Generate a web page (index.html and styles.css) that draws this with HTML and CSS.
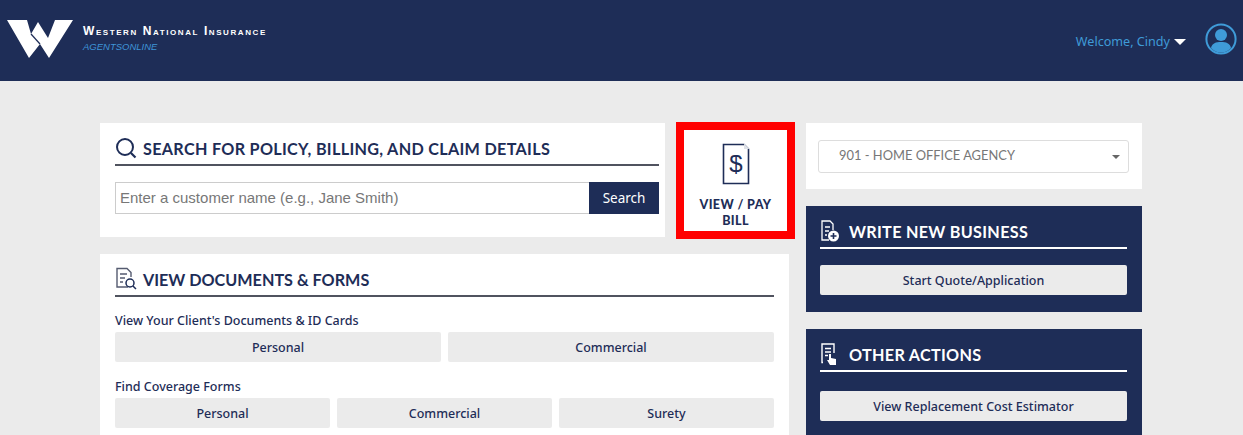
FILE: index.html
```html
<!DOCTYPE html>
<html lang="en">
<head>
    <meta charset="UTF-8">
    <title>AgentsOnline</title>
    <link rel="stylesheet" href="styles.css">
</head>
<body>
<header class="top-bar">
    <div class="brand">
        <svg class="brand-logo" viewBox="0 0 67 40" width="67" height="40">
            <path fill="#fff" d="M0 1H20L24 15L31 3L41 19L48 1H66L42 39L33 25L22 39Z"/>
            <path d="M24 15L33 25" stroke="#1e2d57" stroke-width="1.200"/>
        </svg>
        <div class="brand-text">
            <div class="brand-name">Western National Insurance</div>
            <div class="brand-sub">AGENTSONLINE</div>
        </div>
    </div>
    <div class="user-menu">
        <span class="welcome">Welcome, Cindy</span>
        <span class="caret"></span>
        <svg class="avatar" viewBox="0 0 32 32" width="32" height="32">
            <circle cx="16" cy="16" r="14.600" fill="none" stroke="#3f9bd8" stroke-width="2"/>
            <circle cx="16" cy="12" r="6" fill="#3f9bd8"/>
            <path fill="#3f9bd8" d="M6 25C7 20 11 19 16 19S25 20 26 25C23 28 20 29.500 16 29.500S9 28 6 25Z"/>
        </svg>
    </div>
</header>

<main class="page">
    <div class="col-left">
        <div class="top-row">
            <section class="card search-card">
                <h2 class="card-title">
                    <svg class="title-icon" viewBox="0 0 22 22" width="22" height="22">
                        <circle cx="10" cy="10" r="8" fill="none" stroke="#1e2d57" stroke-width="2"/>
                        <path d="M16 16L20.500 20.500" stroke="#1e2d57" stroke-width="2.200"/>
                    </svg>
                    SEARCH FOR POLICY, BILLING, AND CLAIM DETAILS
                </h2>
                <div class="search-form">
                    <input class="search-input" type="text" placeholder="Enter a customer name (e.g., Jane Smith)">
                    <button class="search-btn">Search</button>
                </div>
            </section>
            <a class="pay-box">
                <svg viewBox="0 0 28 42" width="28" height="42">
                    <path d="M1.500 1.500H22L26.500 6V40.500H1.500Z" fill="#fff" stroke="#1e2d57" stroke-width="1.600"/>
                    <path d="M22 0.500V6H27.500Z" fill="#dfe2e8"/>
                    <text x="14" y="29" text-anchor="middle" class="dollar">$</text>
                </svg>
                <span>VIEW / PAY<br>BILL</span>
            </a>
        </div>

        <section class="card docs-card">
            <h2 class="card-title">
                <svg class="title-icon" viewBox="0 0 22 24" width="22" height="24">
                    <path d="M13 20H2V1.500H12L16 5.500V10" fill="none" stroke="#555b70" stroke-width="1.400"/>
                    <path d="M5 7H12M5 11H10M5 15H8" stroke="#555b70" stroke-width="1.400"/>
                    <circle cx="15" cy="16" r="4" fill="none" stroke="#1e2d57" stroke-width="1.500"/>
                    <path d="M18 19L21 22" stroke="#1e2d57" stroke-width="1.500"/>
                </svg>
                VIEW DOCUMENTS &amp; FORMS
            </h2>
            <div class="group-label">View Your Client's Documents &amp; ID Cards</div>
            <div class="btn-row">
                <button class="grey-btn">Personal</button>
                <button class="grey-btn">Commercial</button>
            </div>
            <div class="group-label group-label-second">Find Coverage Forms</div>
            <div class="btn-row">
                <button class="grey-btn">Personal</button>
                <button class="grey-btn">Commercial</button>
                <button class="grey-btn">Surety</button>
            </div>
        </section>
    </div>

    <div class="col-right">
        <section class="card agency-card">
            <div class="agency-select">
                <span class="agency-name">901 - HOME OFFICE AGENCY</span>
                <span class="select-caret"></span>
            </div>
        </section>
        <section class="dark-card write-card">
            <h2 class="card-title">
                <svg class="title-icon" viewBox="0 0 20 24" width="20" height="24">
                    <path d="M9 21H2V2H10L13 5V11" fill="none" stroke="#fff" stroke-width="1.300"/>
                    <path d="M5 8H10M5 12H9M5 16H7" stroke="#fff" stroke-width="1.300"/>
                    <circle cx="13.500" cy="17" r="5.500" fill="#fff"/>
                    <path d="M13.500 14V20M10.500 17H16.500" stroke="#1e2d57" stroke-width="1.600"/>
                </svg>
                WRITE NEW BUSINESS
            </h2>
            <button class="grey-btn light-btn">Start Quote/Application</button>
        </section>
        <section class="dark-card other-card">
            <h2 class="card-title">
                <svg class="title-icon" viewBox="0 0 20 24" width="20" height="24">
                    <path d="M3 20.500H2V2H14V11" fill="none" stroke="#fff" stroke-width="1.400"/>
                    <path d="M5 6.500H11M5 10H11M5 13.500H8" stroke="#fff" stroke-width="1.400"/>
                    <path fill="#fff" d="M9 12H11V16L16 17V23H10L7 18H9Z"/>
                </svg>
                OTHER ACTIONS
            </h2>
            <button class="grey-btn light-btn other-btn">View Replacement Cost Estimator</button>
        </section>
    </div>
</main>
</body>
</html>
```

FILE: styles.css
```css
html {
    overflow: hidden;
}

body {
    margin: 0;
    height: 435px;
    overflow: hidden;
    background-color: #ebebeb;
    font-family: "Lato", sans-serif;
    color: #1e2d57;
}

/* Header */
.top-bar {
    height: 81px;
    background-color: #1e2d57;
    display: flex;
    justify-content: space-between;
    align-items: center;
    padding: 0 6px 0 7px;
}

.brand {
    display: flex;
    align-items: flex-start;
    margin-top: -4px;
}

.brand-logo {
    display: block;
}

.brand-text {
    margin: 5px 0 0 9px;
}

.brand-name {
    color: #fff;
    font-family: "Liberation Sans", sans-serif;
    font-weight: bold;
    font-size: 12px;
    font-variant: small-caps;
    letter-spacing: 1.580px;
    line-height: 14px;
}

.brand-sub {
    color: #3f95d8;
    font-family: "Liberation Sans", sans-serif;
    font-style: italic;
    font-size: 9.500px;
    line-height: 15px;
    margin-top: 1px;
}

.user-menu {
    display: flex;
    align-items: center;
}

.welcome {
    color: #3f9bd8;
    font-family: "Noto Sans", sans-serif;
    font-size: 12.600px;
    padding-top: 2px;
}

.caret {
    width: 0;
    height: 0;
    border-left: 6px solid transparent;
    border-right: 6px solid transparent;
    border-top: 6px solid #fff;
    margin: 2px 19px 0 4px;
}

.avatar {
    margin-top: -3px;
}

/* Layout */
.page {
    display: grid;
    grid-template-columns: 689px 336px;
    column-gap: 17px;
    padding: 42px 0 0 100px;
}

.col-left,
.col-right {
    display: flex;
    flex-direction: column;
    gap: 17px;
}

.top-row {
    display: flex;
    align-items: flex-start;
    gap: 11px;
    margin-right: -6px;
}

.card {
    background-color: #fff;
}

.card-title {
    margin: 0;
    display: flex;
    align-items: center;
    gap: 6px;
    height: 28px;
    padding-bottom: 2px;
    font-size: 16.200px;
    font-weight: 700;
    letter-spacing: 0.300px;
    border-bottom: 2px solid #50535f;
}

.title-icon {
    flex: none;
}

/* Search */
.search-card {
    width: 544px;
    height: 103px;
    padding: 11px 6px 0 15px;
}

.search-form {
    display: flex;
    height: 32px;
    margin-top: 16px;
}

.search-input {
    flex: 1;
    min-width: 0;
    box-sizing: border-box;
    border: 1px solid #ccc;
    border-right: none;
    padding: 0 4px 1px 4px;
    font-family: "Liberation Sans", sans-serif;
    font-size: 15px;
    outline: none;
}

.search-input::placeholder {
    color: #777;
}

.search-btn {
    width: 70px;
    border: none;
    background-color: #1e2d57;
    color: #fff;
    font-family: "Noto Sans", sans-serif;
    font-size: 13.500px;
    font-weight: 400;
}

.pay-box {
    flex: none;
    width: 103px;
    height: 88px;
    margin: -1px 0 -2px;
    border: 8px solid #f00;
    background-color: #fff;
    display: flex;
    flex-direction: column;
    align-items: center;
    padding-top: 13px;
    font-size: 12.500px;
    font-weight: 900;
    letter-spacing: 0.400px;
    line-height: 16px;
    text-align: center;
}

.pay-box span {
    margin-top: 12px;
    margin-bottom: -12px;
}

.dollar {
    font-family: "Liberation Sans", sans-serif;
    font-weight: 400;
    font-size: 24px;
    fill: #1e2d57;
}

/* Documents */
.docs-card {
    padding: 11px 15px 20px;
}

.docs-card .card-title {
    letter-spacing: 0;
}

.group-label {
    font-family: "Noto Sans", sans-serif;
    font-size: 12.500px;
    font-weight: 500;
    line-height: 17px;
    margin-top: 15px;
}

.group-label-second {
    margin-top: 16px;
}

.btn-row {
    display: flex;
    gap: 7px;
    margin-top: 3px;
}

.grey-btn {
    flex: 1;
    height: 30px;
    border: none;
    border-radius: 2px;
    background-color: #ebebeb;
    color: #1e2d57;
    font-family: "Noto Sans", sans-serif;
    font-size: 12.500px;
    font-weight: 500;
}

/* Right column */
.agency-card {
    height: 66px;
    box-sizing: border-box;
    padding: 17px 13px 0 12px;
}

.agency-select {
    height: 33px;
    box-sizing: border-box;
    border: 1px solid #ddd;
    border-radius: 3px;
    display: flex;
    justify-content: space-between;
    align-items: center;
    padding: 0 8px 0 20px;
    color: #777;
    font-size: 12.900px;
}

.agency-name {
    padding-bottom: 4px;
}

.select-caret {
    width: 0;
    height: 0;
    border-left: 4px solid transparent;
    border-right: 4px solid transparent;
    border-top: 4px solid #666;
}

.dark-card {
    background-color: #1e2d57;
    padding: 11px 15px 17px 14px;
}

.dark-card .card-title {
    color: #fff;
    border-bottom-color: #fff;
    gap: 9px;
}

.light-btn {
    display: block;
    width: 100%;
    margin-top: 16px;
}

.other-btn {
    margin-top: 19px;
}
```
